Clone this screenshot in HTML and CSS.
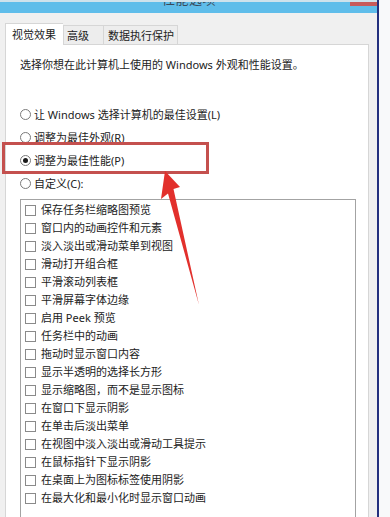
FILE: index.html
```html
<!DOCTYPE html>
<html lang="zh-CN">
<head>
<meta charset="utf-8">
<title>性能选项</title>
<link rel="stylesheet" href="styles.css">
</head>
<body>
<div class="screen">
  <div class="window">
    <div class="titlebar">
      <span class="title">性能选项</span>
      <span class="close"></span>
    </div>
    <div class="tabs">
      <div class="tab tab-active tab-1">视觉效果</div>
      <div class="tab tab-2">高级</div>
      <div class="tab tab-3">数据执行保护</div>
    </div>
    <div class="panel">
      <p class="intro">选择你想在此计算机上使用的 Windows 外观和性能设置。</p>
      <div class="radios">
        <div class="radio-row"><span class="radio"></span><span>让 Windows 选择计算机的最佳设置(L)</span></div>
        <div class="radio-row"><span class="radio"></span><span>调整为最佳外观(R)</span></div>
        <div class="radio-row"><span class="radio radio-on"></span><span>调整为最佳性能(P)</span></div>
        <div class="radio-row"><span class="radio"></span><span>自定义(C):</span></div>
      </div>
      <div class="list">
        <div class="item"><span class="check"></span><span>保存任务栏缩略图预览</span></div>
        <div class="item"><span class="check"></span><span>窗口内的动画控件和元素</span></div>
        <div class="item"><span class="check"></span><span>淡入淡出或滑动菜单到视图</span></div>
        <div class="item"><span class="check"></span><span>滑动打开组合框</span></div>
        <div class="item"><span class="check"></span><span>平滑滚动列表框</span></div>
        <div class="item"><span class="check"></span><span>平滑屏幕字体边缘</span></div>
        <div class="item"><span class="check"></span><span>启用 Peek 预览</span></div>
        <div class="item"><span class="check"></span><span>任务栏中的动画</span></div>
        <div class="item"><span class="check"></span><span>拖动时显示窗口内容</span></div>
        <div class="item"><span class="check"></span><span>显示半透明的选择长方形</span></div>
        <div class="item"><span class="check"></span><span>显示缩略图，而不是显示图标</span></div>
        <div class="item"><span class="check"></span><span>在窗口下显示阴影</span></div>
        <div class="item"><span class="check"></span><span>在单击后淡出菜单</span></div>
        <div class="item"><span class="check"></span><span>在视图中淡入淡出或滑动工具提示</span></div>
        <div class="item"><span class="check"></span><span>在鼠标指针下显示阴影</span></div>
        <div class="item"><span class="check"></span><span>在桌面上为图标标签使用阴影</span></div>
        <div class="item"><span class="check"></span><span>在最大化和最小化时显示窗口动画</span></div>
      </div>
    </div>
  </div>
  <div class="outside"></div>

  <div class="highlight"></div>
  <svg class="arrow" width="390" height="517" viewBox="0 0 390 517" aria-hidden="true">
    <polygon points="165,171 180,187 173.5,189 199,305 168,193.5 161,199" fill="#e2302c"/>
  </svg>
</div>
</body>
</html>
```

FILE: styles.css
```css
* { box-sizing: border-box; }

html, body {
  margin: 0;
  padding: 0;
}

body {
  width: 390px;
  height: 517px;
  overflow: hidden;
  background: #f7f8fa;
  font-family: "Noto Sans", "Noto Sans CJK SC", sans-serif;
  font-size: 11px;
  color: #222;
}

.screen {
  position: relative;
  display: flex;
  width: 390px;
  height: 517px;
  overflow: hidden;
}

.window {
  width: 379px;
  height: 517px;
  flex: none;
  background: #f0f0f0;
  border-right: 2px solid #23307e;
  display: flex;
  flex-direction: column;
}

.outside {
  flex: 1;
  background: #f8f9fa;
}

.titlebar {
  height: 13px;
  flex: none;
  background: #5fbdea;
  border-top: 2px solid #cfe2ec;
  display: flex;
  align-items: flex-start;
  overflow: hidden;
}

.title {
  margin-left: 162px;
  margin-top: -9px;
  font-size: 13px;
  line-height: 13px;
  color: #3a4a5a;
  letter-spacing: 0.5px;
}

.close {
  margin-left: auto;
  margin-top: -2px;
  width: 27px;
  height: 6px;
  background: #c75a5a;
}

.tabs {
  display: flex;
  align-items: flex-end;
  margin-top: 10px;
  padding-left: 5px;
  height: 21px;
  flex: none;
  position: relative;
  z-index: 1;
}

.tab {
  height: 19px;
  border: 1px solid #d6d6d6;
  border-bottom: none;
  background: #ededed;
  font-family: "Noto Sans CJK SC", sans-serif;
  font-size: 11px;
  line-height: 18px;
  white-space: nowrap;
  color: #222;
}

.tab-active {
  height: 22px;
  background: #fff;
  line-height: 20px;
  margin-bottom: -1px;
}

.tab-1 { width: 58px; padding-left: 6px; border-right: none; }
.tab-2 { width: 40px; padding-left: 3px; border-right: none; }
.tab-3 { width: 75px; padding-left: 4px; }

.panel {
  flex: 1;
  margin-left: 5px;
  width: 364px;
  background: #fff;
  border: 1px solid #d6d6d6;
  border-bottom: none;
  padding: 12px 0 0 14px;
}

.intro {
  margin: 0;
  line-height: 16px;
  white-space: nowrap;
  font-size: 11px;
}

.radios {
  margin-top: 30px;
  display: flex;
  flex-direction: column;
}

.radio-row {
  height: 23px;
  display: flex;
  align-items: center;
  gap: 3px;
  white-space: nowrap;
  line-height: 14px;
}

.radio {
  width: 11px;
  height: 11px;
  border-radius: 50%;
  border: 1px solid #7a7a7a;
  background: #fff;
  display: flex;
  align-items: center;
  justify-content: center;
  flex: none;
}

.radio-on::after {
  content: "";
  width: 5px;
  height: 5px;
  border-radius: 50%;
  background: #1a1a1a;
}

.list {
  margin-top: 4px;
  width: 336px;
  height: 340px;
  border: 1px solid #a3a3a3;
  border-bottom: none;
  padding: 1px 0 0 4px;
  display: flex;
  flex-direction: column;
}

.item {
  height: 18px;
  display: flex;
  align-items: center;
  gap: 5px;
  white-space: nowrap;
  line-height: 14px;
}

.check {
  width: 11px;
  height: 11px;
  border: 1px solid #8a8a8a;
  background: #fff;
  flex: none;
}

.highlight {
  position: absolute;
  left: 2px;
  top: 142px;
  width: 207px;
  height: 32px;
  border: 3px solid #c4504e;
}

.arrow {
  position: absolute;
  left: 0;
  top: 0;
  pointer-events: none;
}
```
